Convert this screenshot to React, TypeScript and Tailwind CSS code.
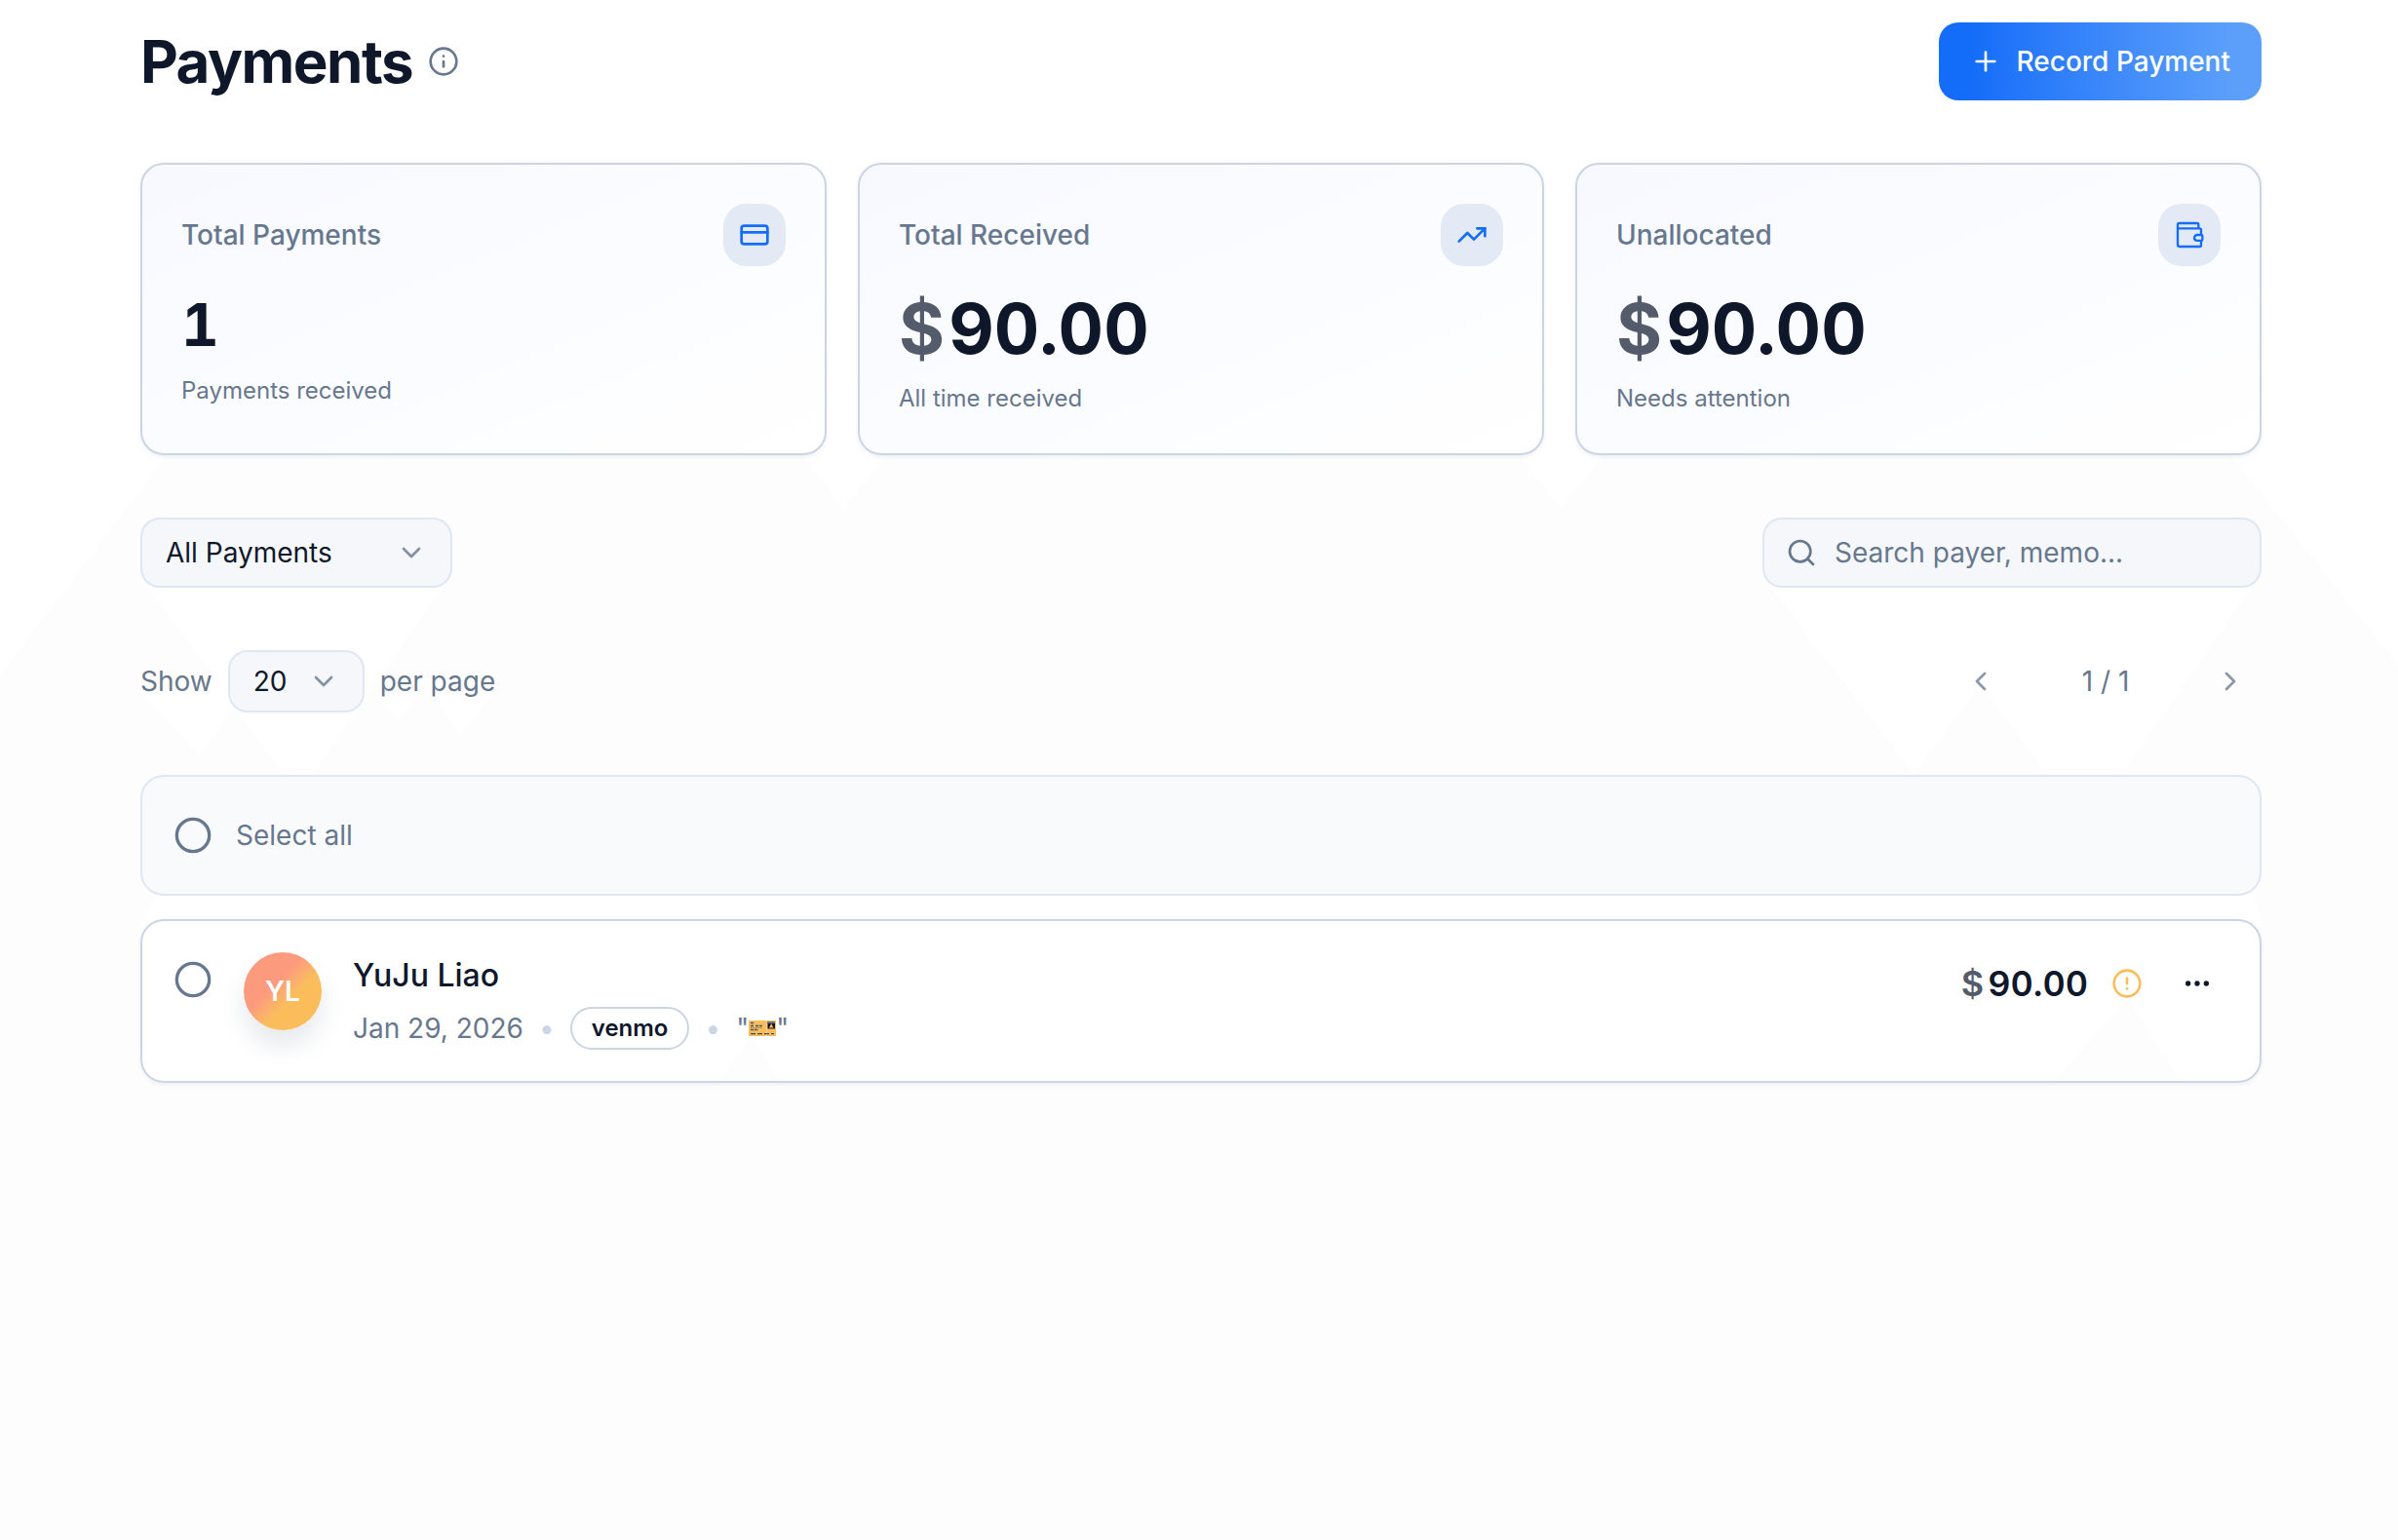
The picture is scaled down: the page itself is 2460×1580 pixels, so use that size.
import { useState } from "react";
import type { ReactNode } from "react";
import { ChevronDown, ChevronLeft, ChevronRight, Circle, CircleAlert, CreditCard, Ellipsis, Info, Plus, Search, TrendingUp } from "lucide-react";

function WalletIcon() {
  return (
    <svg viewBox="0 0 24 24" className="size-8" fill="none" stroke="currentColor" strokeWidth="1.75" strokeLinejoin="round" aria-hidden="true">
      <path d="M19 7V4a1 1 0 0 0-1-1H4a1 1 0 0 0-1 1v15.500A1.500 1.500 0 0 0 4.500 21H20a1 1 0 0 0 1-1v-3.500M3 7h17a1 1 0 0 1 1 1v4" />
      <path d="M21 12h-3a2.200 2.200 0 0 0 0 4.400h3a1 1 0 0 0 1-1V13a1 1 0 0 0-1-1z" />
    </svg>
  );
}

function TicketIcon() {
  return (
    <svg viewBox="0 0 28 16" className="h-4 w-7" role="img" aria-label="ticket">
      <rect width="28" height="16" fill="#fbbd5c" />
      <path d="M18.500 0v16" stroke="#fde3b4" strokeWidth="1" strokeDasharray="2 1.500" />
      <path d="M2 2.500h4M2 5.500h3M7 5.500h7M2 9.500h8" stroke="#4b5563" strokeWidth="1.600" strokeDasharray="3 .8" />
      <path d="M2 7.500h12" stroke="#8b7a55" strokeWidth="1" strokeDasharray="1.500 1" />
      <path d="M2 13.700h24" stroke="#3f4a5c" strokeWidth="1.200" strokeDasharray="5 2" />
      <rect x="19.500" y="1" width="7.500" height="7.500" fill="#0f172a" />
      <rect x="19.500" y="1" width="7.500" height="2" fill="#64748b" />
      <path d="M23.200 3l2.200 4.500h-4.400z" fill="#fbbd5c" />
    </svg>
  );
}

function Backdrop() {
  return (
    <svg viewBox="0 0 2460 1580" preserveAspectRatio="none" className="absolute inset-0 -z-10 size-full" aria-hidden="true">
      <g fill="#ffffff">
        <path d="M0 0H2460V682L2288 466H1646L1602 522L1558 466H910L865 522L822 466H172L0 692Z" />
        <path d="M150 600H456L320 795H292L240 726L204 776L146 712L217 690Z" />
        <path d="M390 714H430L408 740ZM444 714H504L472 755Z" />
        <path d="M1815 600H2312L2175 795H2100L2032 702L1964 795Z" />
        <path d="M160 917H2310L2320 943V1109H2237L2182 1024L2107 1109H800L770 1062L738 1109H144V950Z" />
      </g>
    </svg>
  );
}

function StatCard({ label, icon, note, children }: { label: string; icon: ReactNode; note: string; children: ReactNode }) {
  return (
    <section className="rounded-3xl border-2 border-[#cbd5e4] bg-linear-to-br from-[#f7f9ff] to-white p-10 shadow-[0_2px_4px_#64748b1a]">
      <div className="flex items-center justify-between">
        <h2 className="text-[28px] leading-10 font-medium text-[#67778e]">{label}</h2>
        <span className="flex size-16 items-center justify-center rounded-3xl bg-[#e3e9f5] text-[#136df8]">{icon}</span>
      </div>
      <div className="mt-6 font-bold text-[#0f172a] tabular-nums">{children}</div>
      <p className="mt-4 text-2xl leading-8 text-[#67778e]">{note}</p>
    </section>
  );
}

function Amount({ value }: { value: string }) {
  return (
    <p className="flex gap-1 text-7xl leading-20">
      <span className="text-[#545c6b]">$</span>
      <span>{value}</span>
    </p>
  );
}

function Dropdown({ label, options, className }: { label: string; options: string[]; className: string }) {
  return (
    <span className={className}>
      <select aria-label={label} className="size-full appearance-none rounded-[20px] border-2 border-[#e0e7f4] bg-[#f5f7fa] px-6 text-[28px] text-[#0f172a]">
        {options.map((o) => (
          <option key={o}>{o}</option>
        ))}
      </select>
      <ChevronDown className="pointer-events-none absolute inset-y-0 right-[26px] my-auto size-8 text-[#8491a5]" />
    </span>
  );
}

function Tick({ id, label }: { id: string; label: string }) {
  const [on, setOn] = useState(false);
  return (
    <span className="relative flex size-10 shrink-0 text-[#67778e]">
      <input type="checkbox" id={id} aria-label={label} checked={on} onChange={() => setOn(!on)} className="absolute inset-0 size-full appearance-none rounded-full" />
      <Circle className="pointer-events-none size-10" fill={on ? "currentColor" : "none"} />
    </span>
  );
}

export default function App() {
  return (
    <div className="relative isolate min-h-screen bg-[#fdfdfd] pt-[23px] pr-[140px] pb-16 pl-36 font-['Inter',sans-serif] text-[28px] leading-10 text-[#67778e]">
      <Backdrop />
      <main className="flex flex-col gap-16">
        <header className="flex items-center justify-between">
          <div className="flex items-center gap-4">
            <h1 className="text-6xl leading-20 font-bold tracking-tight text-[#0f172a]">Payments</h1>
            <button aria-label="About payments">
              <Info className="size-8" />
            </button>
          </div>
          <button className="flex h-20 items-center gap-4 rounded-[20px] bg-linear-to-r from-[#136df8] from-10% to-[#5b9ffb] to-90% px-8 font-medium text-white">
            <Plus className="size-8" />
            Record Payment
          </button>
        </header>

        <div className="grid grid-cols-3 gap-8">
          <StatCard label="Total Payments" icon={<CreditCard className="size-8" />} note="Payments received">
            <p className="text-6xl leading-18">1</p>
          </StatCard>
          <StatCard label="Total Received" icon={<TrendingUp className="size-8" />} note="All time received">
            <Amount value="90.00" />
          </StatCard>
          <StatCard label="Unallocated" icon={<WalletIcon />} note="Needs attention">
            <Amount value="90.00" />
          </StatCard>
        </div>

        <div className="flex items-center justify-between">
          <Dropdown label="Filter payments" options={["All Payments", "Unallocated"]} className="relative h-18 w-80" />
          <div className="relative h-18 w-lg">
            <Search className="absolute inset-y-0 left-6 my-auto size-8" />
            <input aria-label="Search payments" placeholder="Search payer, memo..." className="size-full rounded-[20px] border-2 border-[#e0e7f4] bg-[#f5f7fa] pr-6 pl-18 placeholder:text-[#67778e]" />
          </div>
        </div>

        <div className="flex items-center justify-between">
          <div className="flex items-center gap-4">
            <span>Show</span>
            <Dropdown label="Rows per page" options={["20", "50"]} className="relative h-16 w-35" />
            <span>per page</span>
          </div>
          <nav aria-label="Pages" className="flex items-center gap-4">
            <button aria-label="Previous page" className="flex size-16 items-center justify-center opacity-75">
              <ChevronLeft className="size-8" />
            </button>
            <span className="w-40 text-center">1 / 1</span>
            <button aria-label="Next page" className="flex size-16 items-center justify-center opacity-75">
              <ChevronRight className="size-8" />
            </button>
          </nav>
        </div>

        <div className="flex flex-col gap-6">
          <div className="flex items-center gap-6 rounded-3xl border-2 border-[#e0e7f4] bg-[#f9fafc] px-8 py-10">
            <Tick id="select-all" label="Select all" />
            <label htmlFor="select-all">Select all</label>
          </div>

          <article className="flex items-start gap-8 rounded-3xl border-2 border-[#cbd5e4] p-8 shadow-[0_2px_4px_#64748b1a]">
            <div className="pt-2">
              <Tick id="select-payment" label="Select YuJu Liao" />
            </div>
            <span className="flex size-20 items-center justify-center rounded-full bg-linear-to-br from-[#fc9a7e] from-40% to-[#fbbd5c] to-60% font-semibold text-white shadow-[0_16px_24px_#64748b29]">YL</span>
            <div className="flex flex-1 flex-col gap-2">
              <h3 className="text-[32px] leading-12 font-medium text-[#0f172a]">YuJu Liao</h3>
              <div className="flex h-11 items-center gap-4">
                <span>Jan 29, 2026</span>
                <span className="text-[#cbd5e4]">•</span>
                <span className="flex h-11 items-center rounded-full border-2 border-[#cbd5e4] bg-white px-5 text-2xl font-semibold text-[#0f172a]">venmo</span>
                <span className="text-[#cbd5e4]">•</span>
                <span className="flex items-center">
                  "<TicketIcon />"
                </span>
              </div>
            </div>
            <div className="flex h-16 items-center gap-6">
              <p className="flex gap-1 text-4xl font-semibold text-[#0f172a] tabular-nums">
                <span className="text-[#545c6b]">$</span>
                <span>90.00</span>
              </p>
              <CircleAlert className="size-8 text-[#fbbd5c]" />
              <button aria-label="More actions" className="flex size-16 items-center justify-center text-[#0f172a]">
                <Ellipsis className="size-8" />
              </button>
            </div>
          </article>
        </div>
      </main>
    </div>
  );
}
